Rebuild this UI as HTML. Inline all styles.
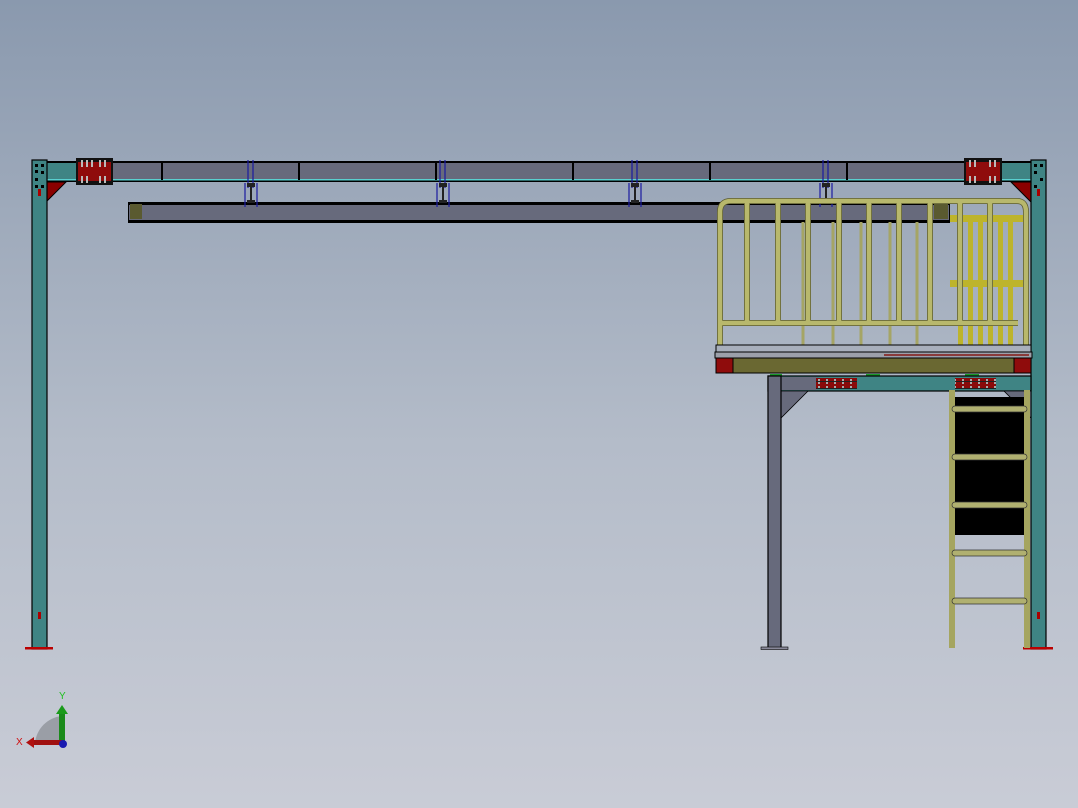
<!DOCTYPE html>
<html><head><meta charset="utf-8"><style>
html,body{margin:0;padding:0}
body{width:1078px;height:808px;overflow:hidden;background:linear-gradient(#8a99ae,#b4bcc9 55%,#c9ccd6);font-family:"Liberation Sans",sans-serif}
svg{position:absolute;left:0;top:0}
</style></head><body>
<svg width="1078" height="808" viewBox="0 0 1078 808">
<defs>
<pattern id="bolt" width="8" height="7" patternUnits="userSpaceOnUse">
<rect width="8" height="7" fill="#8a0a0a"/><rect x="2" y="1" width="2" height="5" fill="#aaa"/><rect x="0" y="3" width="8" height="1" fill="#222"/>
</pattern>
</defs>
<rect x="46" y="161" width="985" height="21" fill="#000"/>
<rect x="46" y="163" width="985" height="16" fill="#3f8484"/>
<rect x="112" y="163" width="853" height="16" fill="#676a7c"/>
<rect x="46" y="179" width="985" height="1.5" fill="#5ad0d0"/>
<g fill="#000"><rect x="161" y="162" width="2" height="18"/><rect x="298" y="162" width="2" height="18"/><rect x="435" y="162" width="2" height="18"/><rect x="572" y="162" width="2" height="18"/><rect x="709" y="162" width="2" height="18"/><rect x="846" y="162" width="2" height="18"/></g>
<rect x="76" y="158" width="37" height="27" fill="#111"/><rect x="78" y="162" width="33" height="19" fill="#8f0c0c"/>
<rect x="964" y="158" width="38" height="27" fill="#111"/><rect x="966" y="162" width="34" height="19" fill="#8f0c0c"/>
<g fill="#bbb"><rect x="81" y="160" width="2" height="7"/><rect x="86" y="160" width="2" height="7"/><rect x="91" y="160" width="2" height="7"/><rect x="99" y="160" width="2" height="7"/><rect x="104" y="160" width="2" height="7"/><rect x="81" y="176" width="2" height="7"/><rect x="86" y="176" width="2" height="7"/><rect x="99" y="176" width="2" height="7"/><rect x="104" y="176" width="2" height="7"/>
<rect x="969" y="160" width="2" height="7"/><rect x="974" y="160" width="2" height="7"/><rect x="989" y="160" width="2" height="7"/><rect x="994" y="160" width="2" height="7"/><rect x="969" y="176" width="2" height="7"/><rect x="974" y="176" width="2" height="7"/><rect x="989" y="176" width="2" height="7"/><rect x="994" y="176" width="2" height="7"/></g>
<polygon points="46,182 66,182 46,202" fill="#8a0000" stroke="#000" stroke-width="1"/>
<polygon points="1031,182 1011,182 1031,202" fill="#8a0000" stroke="#000" stroke-width="1"/>
<rect x="32" y="160" width="15" height="489" fill="#3f8484" stroke="#000" stroke-width="1.2"/>
<rect x="1031" y="160" width="15" height="489" fill="#3f8484" stroke="#000" stroke-width="1.2"/>
<g fill="#000"><rect x="35" y="164" width="3" height="3"/><rect x="35" y="170" width="3" height="3"/><rect x="35" y="178" width="3" height="3"/><rect x="35" y="185" width="3" height="3"/><rect x="41" y="164" width="3" height="3"/><rect x="41" y="171" width="3" height="3"/><rect x="41" y="185" width="3" height="3"/>
<rect x="1034" y="164" width="3" height="3"/><rect x="1040" y="164" width="3" height="3"/><rect x="1034" y="171" width="3" height="3"/><rect x="1040" y="178" width="3" height="3"/><rect x="1034" y="185" width="3" height="3"/></g>
<rect x="38" y="189" width="3" height="7" fill="#a00"/><rect x="1037" y="189" width="3" height="7" fill="#a00"/>
<rect x="38" y="612" width="3" height="7" fill="#a00"/><rect x="1037" y="612" width="3" height="7" fill="#a00"/>
<rect x="25" y="647" width="28" height="2.5" fill="#b00"/><rect x="1023" y="647" width="30" height="2.5" fill="#b00"/>
<rect x="128" y="202" width="822" height="21" fill="#000"/>
<rect x="129" y="205" width="820" height="15" fill="#676a7c"/>
<rect x="130" y="204" width="12" height="15" fill="#5a5a30"/><rect x="934" y="204" width="14" height="15" fill="#5a5a30"/>
<g stroke="#1a1aa0" stroke-width="1.2" fill="none">
<path d="M248,160V188M253,160V188M245,183V207M257,183V207"/>
<path d="M440,160V188M445,160V188M437,183V207M449,183V207"/>
<path d="M632,160V188M637,160V188M629,183V207M641,183V207"/>
<path d="M823,160V188M828,160V188M820,183V207M832,183V207"/>
</g>
<g fill="#222"><rect x="247" y="183" width="8" height="4"/><rect x="250" y="187" width="2" height="14"/><rect x="247" y="200" width="8" height="3"/>
<rect x="439" y="183" width="8" height="4"/><rect x="442" y="187" width="2" height="14"/><rect x="439" y="200" width="8" height="3"/>
<rect x="631" y="183" width="8" height="4"/><rect x="634" y="187" width="2" height="14"/><rect x="631" y="200" width="8" height="3"/>
<rect x="822" y="183" width="8" height="4"/><rect x="825" y="187" width="2" height="14"/><rect x="822" y="200" width="8" height="3"/></g>
<g fill="#bdb42c"><rect x="958" y="215" width="5" height="130"/><rect x="968" y="215" width="5" height="130"/><rect x="978" y="215" width="5" height="130"/><rect x="988" y="215" width="5" height="130"/><rect x="998" y="215" width="5" height="130"/><rect x="1008" y="215" width="5" height="130"/>
<rect x="950" y="215" width="75" height="7"/><rect x="950" y="280" width="75" height="7"/></g>
<g stroke="#a5a565" stroke-width="3"><path d="M803,222V345M833,222V345M861,222V345M890,222V345M917,222V345"/></g>
<g stroke="#5a5a30" stroke-width="6" fill="none">
<path d="M720,346V212Q720,201 731,201H1017Q1026,201 1026,212V346"/>
<path d="M722,323H1018"/>
<path d="M747,203V322M778,203V322M808,203V322M839,203V322M869,203V322M899,203V322M930,203V322M960,203V322M990,203V322"/>
</g>
<g stroke="#b8b86c" stroke-width="4.5" fill="none">
<path d="M720,346V212Q720,201 731,201H1017Q1026,201 1026,212V346"/>
<path d="M722,323H1018"/>
<path d="M747,203V322M778,203V322M808,203V322M839,203V322M869,203V322M899,203V322M930,203V322M960,203V322M990,203V322"/>
</g>
<rect x="716" y="345" width="315" height="8" fill="#a8afbc" stroke="#000" stroke-width="1"/>
<rect x="715" y="352" width="317" height="6" fill="#9ca0aa" stroke="#000" stroke-width="1"/>
<rect x="884" y="354" width="145" height="2" fill="#8a3a3a"/>
<rect x="716" y="358" width="315" height="15" fill="#6a6832" stroke="#000" stroke-width="1"/>
<rect x="716" y="358" width="17" height="15" fill="#8f0c0c" stroke="#000" stroke-width="1"/>
<rect x="1014" y="358" width="17" height="15" fill="#8f0c0c" stroke="#000" stroke-width="1"/>
<rect x="770" y="374" width="12" height="3" fill="#1a9a2a"/><rect x="866" y="374" width="14" height="3" fill="#1a9a2a"/><rect x="965" y="374" width="14" height="3" fill="#1a9a2a"/>
<rect x="768" y="376" width="263" height="15" fill="#3f8484" stroke="#000" stroke-width="1.2"/>
<rect x="781" y="377" width="36" height="13" fill="#676a7c"/>
<rect x="816" y="378" width="41" height="11" fill="url(#bolt)"/>
<rect x="955" y="378" width="41" height="11" fill="url(#bolt)"/>
<polygon points="781,391 808,391 781,418" fill="#676a7c" stroke="#000" stroke-width="0.8"/>
<polygon points="1031,391 1004,391 1031,418" fill="#676a7c" stroke="#000" stroke-width="0.8"/>
<rect x="768" y="376" width="13" height="272" fill="#676a7c" stroke="#000" stroke-width="1.2"/>
<rect x="761" y="647" width="27" height="2.5" fill="#889" stroke="#000" stroke-width="0.6"/>
<rect x="955" y="397" width="69" height="138" fill="#000"/>
<rect x="949" y="390" width="6" height="258" fill="#a5a560"/>
<rect x="1024" y="390" width="6" height="258" fill="#a5a560"/>
<g fill="#b0b070" stroke="#333" stroke-width="0.7"><rect x="952" y="406" width="75" height="6" rx="3"/><rect x="952" y="454" width="75" height="6" rx="3"/><rect x="952" y="502" width="75" height="6" rx="3"/><rect x="952" y="550" width="75" height="6" rx="3"/><rect x="952" y="598" width="75" height="6" rx="3"/></g>
<path d="M35,743 A30,30 0 0 1 62,716 L62,743Z" fill="#9a9ea6"/>
<rect x="59" y="712" width="6" height="32" fill="#1a8a1a"/><polygon points="56,714 62,705 68,714" fill="#1a9a1a"/>
<rect x="33" y="740" width="30" height="5" fill="#a01010"/><polygon points="34,737 26,742.5 34,748" fill="#b01010"/>
<circle cx="63" cy="744" r="4" fill="#1a1ab0"/>
<text x="59" y="699" font-size="10" fill="#20c020">Y</text>
<text x="16" y="745" font-size="10" fill="#d01010">X</text>
</svg>
</body></html>
